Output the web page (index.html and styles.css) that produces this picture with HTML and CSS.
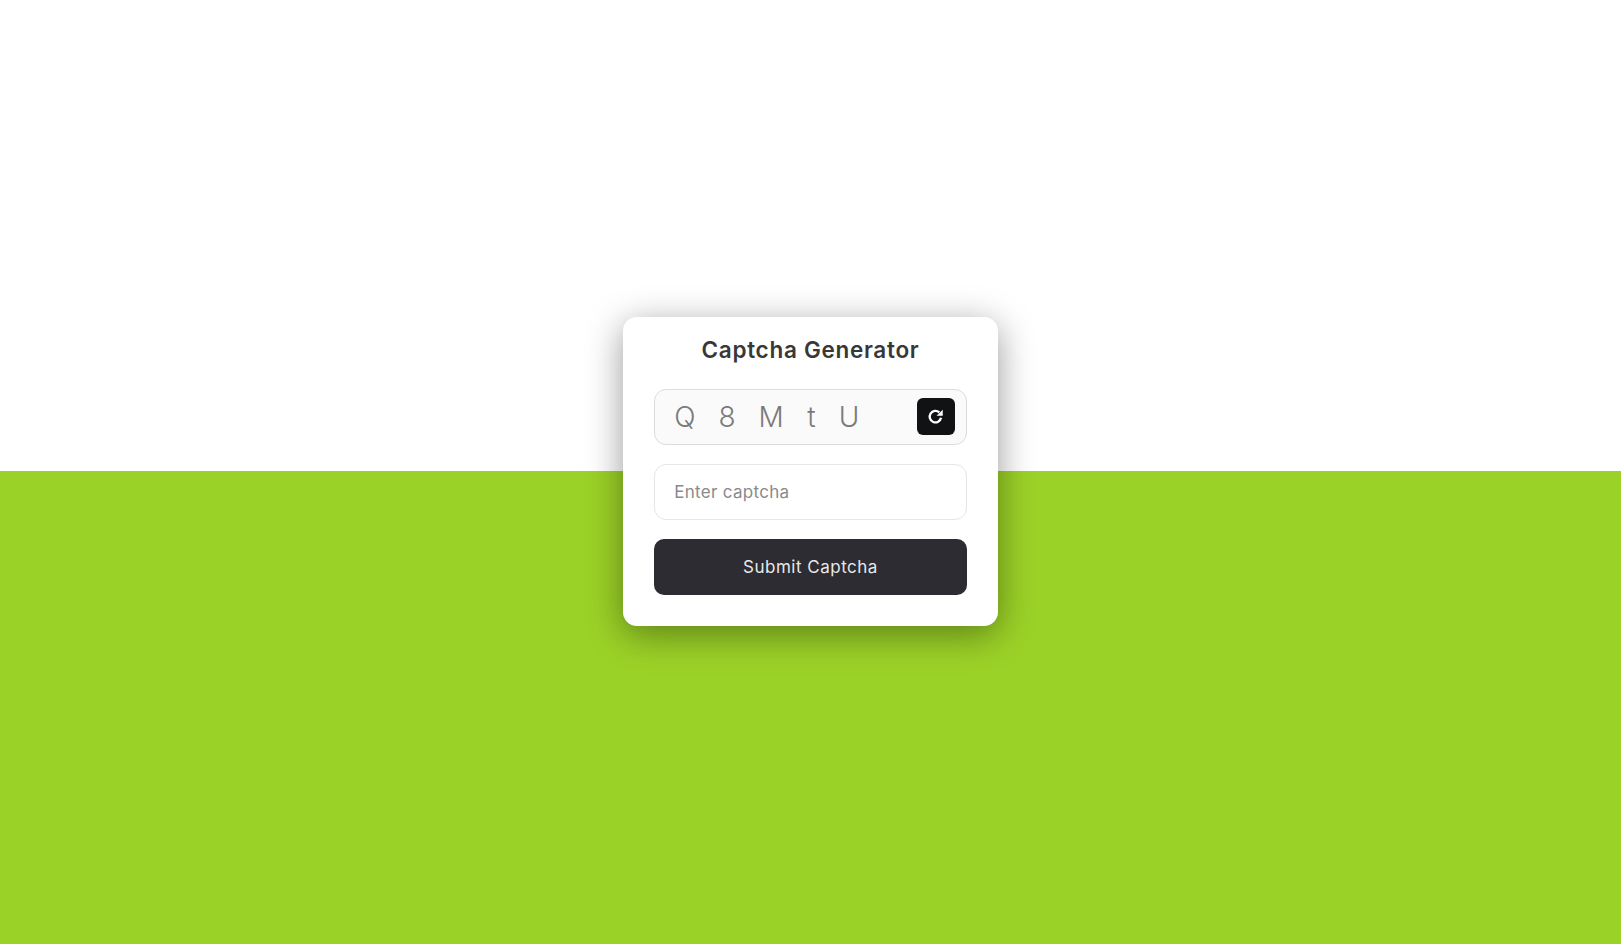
FILE: index.html
```html
<!DOCTYPE html>
<html lang="en">
<head>
<meta charset="utf-8">
<title>Captcha Generator</title>
<link rel="stylesheet" href="styles.css">
</head>
<body>
<main class="card">
  <h1 class="title">Captcha Generator</h1>
  <div class="captcha-box">
    <span class="captcha-text">Q8MtU</span>
    <button class="refresh" type="button" aria-label="Refresh captcha">
      <svg viewBox="0 0 16 16" width="17" height="17" aria-hidden="true">
        <path class="refresh-arc" d="M13.2 9.2a5.4 5.4 0 1 1-1.6-5"/>
        <path class="refresh-head" d="M14.8 1.6v5.8H9z"/>
      </svg>
    </button>
  </div>
  <input class="field" type="text" placeholder="Enter captcha">
  <button class="submit" type="button">Submit Captcha</button>
</main>
</body>
</html>
```
FILE: styles.css
```css
* { box-sizing: border-box; }
html, body { height: 100%; }
body {
  margin: 0;
  padding-bottom: 2px;
  display: flex;
  align-items: center;
  justify-content: center;
  background: linear-gradient(to bottom, #ffffff 471px, #9bd227 471px);
  font-family: Inter, "Open Sans", sans-serif;
}
.card {
  width: 375px;
  height: 309px;
  padding: 0 31.25px;
  background: #fff;
  border-radius: 14px;
  box-shadow: 0 8px 36px rgba(0, 0, 0, 0.4);
  display: flex;
  flex-direction: column;
}
.title {
  margin: 0;
  height: 72px;
  line-height: 66px;
  text-align: center;
  font-size: 22.5px;
  font-weight: 600;
  letter-spacing: 0.7px;
  color: #383838;
}
.captcha-box {
  height: 56px;
  margin-bottom: 19px;
  padding: 0 11px 0 19px;
  display: flex;
  align-items: center;
  justify-content: space-between;
  background: #fafafa;
  border: 1px solid #dcdcdc;
  border-radius: 12px;
}
.captcha-text {
  font-size: 28px;
  font-weight: 300;
  color: #7a7a7a;
  letter-spacing: 23px;
  white-space: pre;
}
.refresh {
  width: 38px;
  height: 37px;
  padding: 0;
  border: 0;
  border-radius: 6px;
  background: #111214;
  display: flex;
  align-items: center;
  justify-content: center;
}
.refresh-arc { fill: none; stroke: #fff; stroke-width: 2.2; }
.refresh-head { fill: #fff; }
.field {
  height: 56px;
  margin-bottom: 19px;
  padding: 0 19px;
  border: 1px solid #e6e6e6;
  border-radius: 12px;
  background: #fff;
  font: 400 17px Inter, "Open Sans", sans-serif;
  letter-spacing: 0.3px;
  color: #333;
  outline: none;
}
.field::placeholder { color: #8a8a8a; opacity: 1; }
.submit {
  height: 56px;
  border: 0;
  border-radius: 10px;
  background: #2c2c32;
  color: #e8e8e8;
  font: 400 17px Inter, "Open Sans", sans-serif;
  letter-spacing: 0.5px;
}
```
